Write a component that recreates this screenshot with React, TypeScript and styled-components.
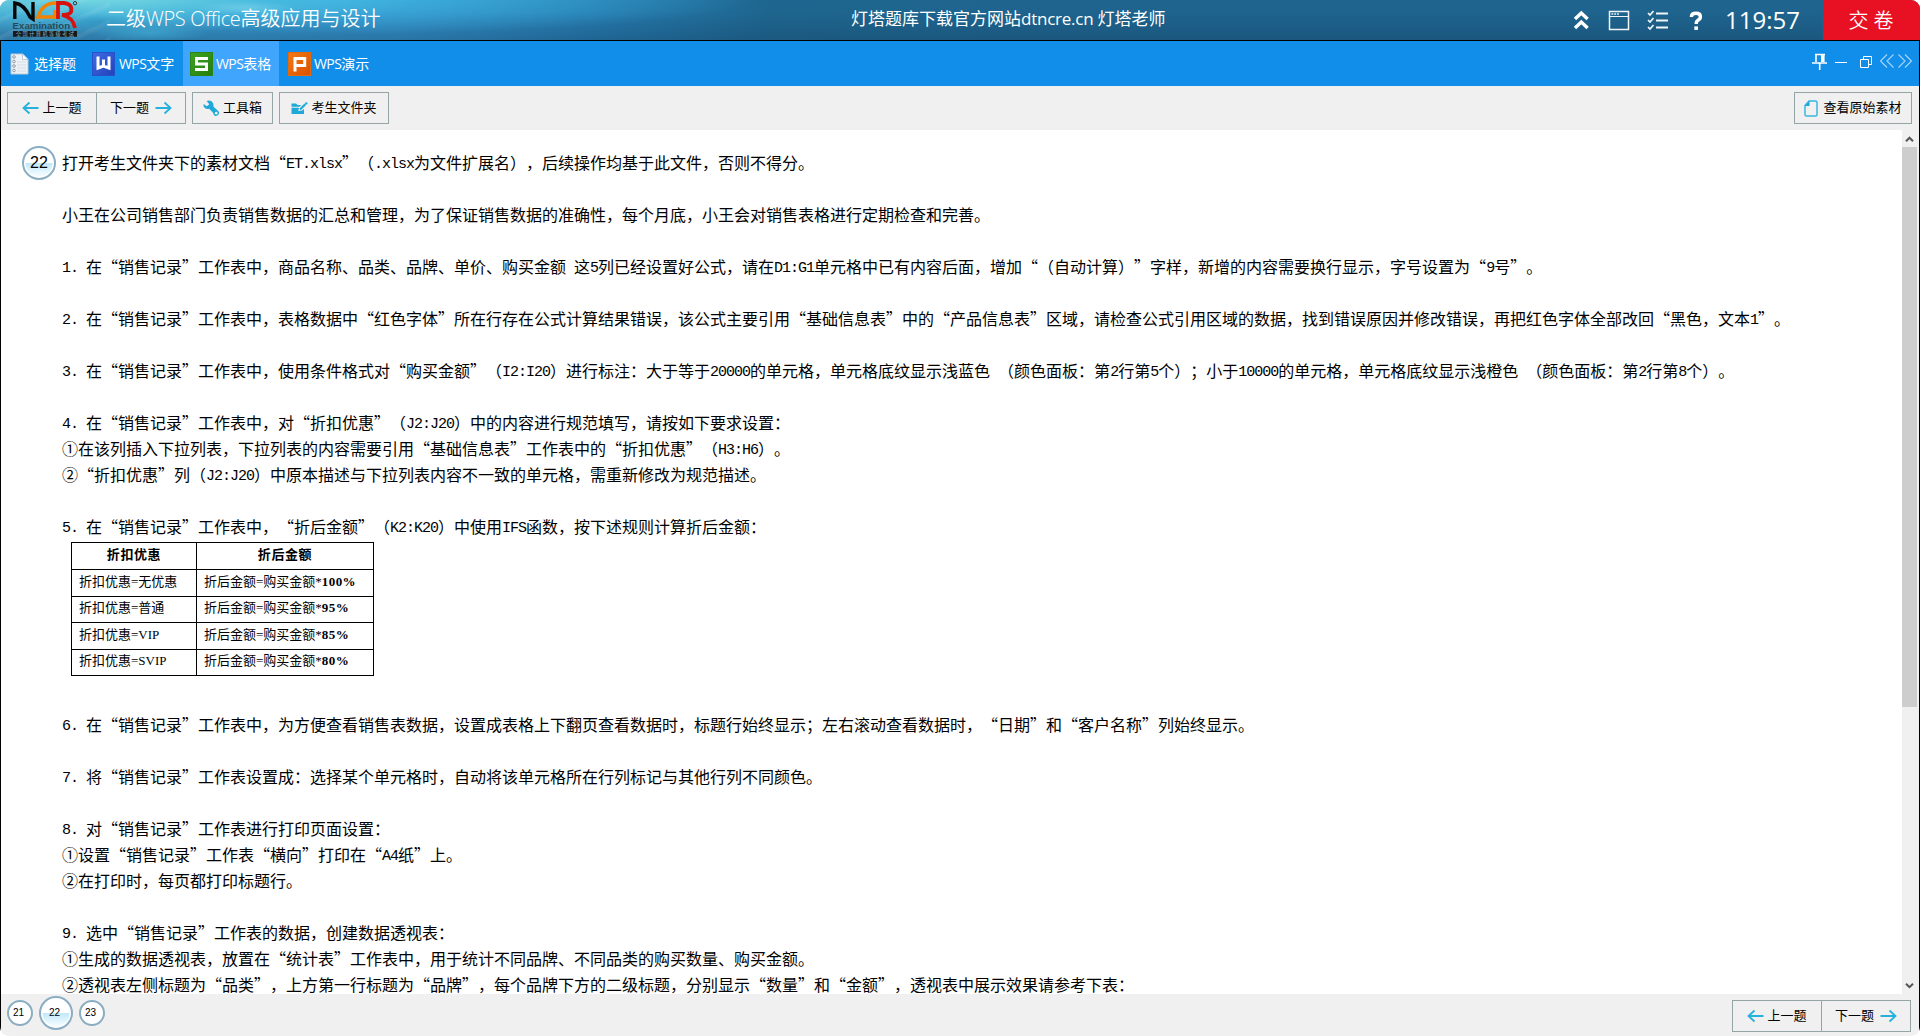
import React from "react";
import styled, { createGlobalStyle } from "styled-components";

const ui = `"Open Sans", "Noto Sans CJK SC", sans-serif`;
const cjk = `"Noto Sans CJK SC", sans-serif`;

const Global = createGlobalStyle`
  html, body { margin: 0; padding: 0; background: #fff; overflow: hidden; }
  * { box-sizing: border-box; }
  svg { display: block; flex: none; }
`;

const Window = styled.div`
  width: 1920px;
  height: 1036px;
  display: flex;
  flex-direction: column;
  overflow: hidden;
  border-radius: 9px;
  font-family: ${ui};
  text-spacing-trim: space-all;
  font-kerning: none;
`;

const Header = styled.header`
  height: 41px;
  flex: none;
  display: grid;
  grid-template-columns: 106px 745px 1fr auto 97px;
  border-bottom: 1px solid #000;
  color: #fff;
  background:
    radial-gradient(ellipse 60px 9px at 150px 33px, rgba(70, 190, 225, 0.5), transparent),
    radial-gradient(ellipse 50px 7px at 245px 8px, rgba(170, 235, 245, 0.35), transparent),
    radial-gradient(ellipse 36px 8px at 96px 22px, rgba(30, 130, 180, 0.35), transparent),
    repeating-linear-gradient(155deg, rgba(255, 255, 255, 0.07) 0 3px, transparent 6px 16px) 0 0 / 110px 40px no-repeat,
    radial-gradient(ellipse 330px 36px at 90px -2px, rgba(122, 220, 226, 0.95), rgba(80, 195, 225, 0.55) 55%, transparent),
    radial-gradient(ellipse 420px 38px at 340px -4px, rgba(64, 190, 232, 0.75), transparent),
    linear-gradient(to bottom, transparent 30%, rgba(20, 60, 95, 0.32)),
    linear-gradient(100deg, #3b97c6 0, #3696cd 250px, #338fc8 400px, #2579ad 590px, #1e668f 760px, #1e648e 1000px, #1e648e 100%);
`;

const LogoBox = styled.div`
  padding-left: 12px;
`;

const Title = styled.div`
  font-size: 20px;
  font-weight: 350;
  line-height: 37px;
  white-space: pre;
`;

const Tight = styled.span<{ $gap: number }>`
  letter-spacing: ${(p) => p.$gap}px;
`;

const Site = styled.div`
  font-size: 17px;
  line-height: 38px;
  white-space: pre;
`;

const HeaderTools = styled.div`
  display: flex;
  align-items: center;
  height: 40px;
`;

const Timer = styled.div`
  width: 98px;
  font-size: 24px;
  line-height: 40px;
`;

const Submit = styled.button`
  height: 40px;
  border: 0;
  padding: 0 0 0 4px;
  background: #e81123;
  color: #fff;
  font: 20px/40px ${cjk};
  font-weight: 350;
  letter-spacing: 5px;
`;

const Body = styled.main`
  flex: 1;
  min-height: 0;
  display: flex;
  flex-direction: column;
  border-left: 1px solid #000;
  border-right: 1px solid #000;
  background: #f0f0f0;
`;

const Tabs = styled.nav`
  height: 45px;
  flex: none;
  display: flex;
  background: #108ee9;
`;

const Tab = styled.div<{ $width: number; $pad: number; $gap?: number; $active?: boolean }>`
  width: ${(p) => p.$width}px;
  padding: 0 0 0 ${(p) => p.$pad}px;
  display: flex;
  align-items: center;
  gap: ${(p) => p.$gap ?? 4}px;
  color: #fff;
  background: ${(p) => (p.$active ? "#40a5fc" : "transparent")};
  font-size: 14px;
  line-height: 20px;
  white-space: nowrap;
`;

const TabTools = styled.div`
  margin-left: auto;
  padding-top: 11px;
  height: 36px;
`;

const Toolbar = styled.div`
  height: 44px;
  flex: none;
  display: flex;
  align-items: flex-start;
  padding: 6px 7px 0 6px;
`;

const ToolButton = styled.button<{ $width: number; $joined?: boolean; $gap?: number; $push?: boolean; $inner?: number }>`
  width: ${(p) => p.$width}px;
  height: 32px;
  margin-left: ${(p) => (p.$push ? "auto" : p.$joined ? "-1px" : `${p.$gap ?? 0}px`)};
  padding: 0;
  display: flex;
  align-items: center;
  justify-content: center;
  gap: ${(p) => p.$inner ?? 3}px;
  border: 1px solid #95a5a6;
  background: #f0f0f0;
  color: #000;
  font: 13px/20px ${cjk};
  white-space: nowrap;
`;

const Caption = styled.span`
  padding-bottom: 3px;
`;

const Reading = styled.div`
  height: 864px;
  flex: none;
  display: flex;
  background: #fff;
`;

const Document = styled.article`
  flex: 1;
  min-width: 0;
  height: 864px;
  overflow: hidden;
  display: grid;
  grid-template-columns: 40px 1fr;
  padding: 16px 0 0 21px;
`;

const Lines = styled.div`
  padding-top: 3px;
  font-family: ${cjk};
  font-size: 16px;
  font-weight: 400;
  color: #000;
`;

const Line = styled.p`
  margin: 0;
  height: 26px;
  line-height: 26px;
  white-space: pre;
`;

const Latin = styled.span`
  font-family: "Liberation Mono", monospace;
  font-size: 15px;
  line-height: 18px;
  vertical-align: 1px;
  letter-spacing: -1px;
`;

const Ball = styled.span<{ $size: number; $font: number; $filled?: boolean; $shift?: number }>`
  width: ${(p) => p.$size}px;
  height: ${(p) => p.$size}px;
  flex: none;
  display: flex;
  align-items: center;
  justify-content: center;
  padding-right: ${(p) => p.$shift ?? 0}px;
  border: 2px solid #8badc2;
  border-radius: 50%;
  color: #000;
  font-family: "Liberation Sans", sans-serif;
  font-size: ${(p) => p.$font}px;
  line-height: 1;
  background: ${(p) =>
    p.$filled
      ? "radial-gradient(circle, transparent 13px, #fff 14px), linear-gradient(to bottom, #fff 50%, #bfe8fa 50%, #f2fbff 90%)"
      : "#fff"};
`;

const Rules = styled.table`
  border-collapse: collapse;
  table-layout: fixed;
  width: 302px;
  margin: 3px 0 35px 9px;
  font: 13px/20px "Liberation Serif", "Noto Sans CJK SC", serif;
  color: #000;
`;

const RuleHead = styled.th<{ $width: number }>`
  width: ${(p) => p.$width}px;
  height: 27px;
  padding: 0 0 2px;
  border: 1px solid #000;
  font-weight: 700;
  letter-spacing: 0.6px;
`;

const RuleCell = styled.td`
  height: 26.5px;
  padding: 0 0 2px 7px;
  border: 1px solid #000;
  white-space: nowrap;

  b {
    letter-spacing: 0.4px;
  }
`;

const ScrollTrack = styled.div`
  width: 17px;
  margin-left: auto;
  background: #f0f0f0;
  display: grid;
  grid-template-rows: 17px 560px 1fr 17px;
  justify-items: start;
`;

const Thumb = styled.div`
  width: 15px;
  background: #cdcdcd;
`;

const Footer = styled.footer`
  flex: 1;
  display: flex;
  align-items: flex-start;
  padding: 2px 8px 0 6px;
`;

const Balls = styled.div`
  display: flex;
  align-items: center;
  gap: 6px;
`;

const FooterButtons = styled.div`
  display: flex;
  margin: 4px 0 0 auto;
`;

const Logo = () => (
  <svg width="68" height="38" viewBox="12 0 68 38">
    <path d="M14.8 19V3Q24 4 30 17L33 19V2" fill="none" stroke="#080808" strokeWidth="3.4" />
    <path d="M56 3Q42 3 38 17H55V10" fill="none" stroke="#f08300" strokeWidth="3.4" />
    <path d="M58 19V3H64Q73 4 71 12Q69 15 62 15Q73 17 75 28" fill="none" stroke="#d7110d" strokeWidth="3.8" />
    <circle cx="75" cy="3.2" r="1.7" fill="none" stroke="#222" strokeWidth="0.9" />
    <text x="12.6" y="29" fontFamily="Liberation Sans" fontSize="8.6" fontWeight="700" fill="#254b57" textLength="57.5" lengthAdjust="spacingAndGlyphs">Examination</text>
    <rect x="13" y="31" width="64" height="5.8" fill="#181818" />
    <text x="16" y="36" fontFamily="Noto Sans CJK SC" fontSize="5.2" fill="#83b7c2" textLength="58">全国计算机等级考试</text>
  </svg>
);

const HeaderIcons = () => (
  <svg width="152" height="40" viewBox="1573 0 152 40" fill="none" stroke="#fff">
    <path d="M1575 19L1581.3 13L1587.6 19M1575 28L1581.3 22L1587.6 28" strokeWidth="3.4" />
    <g stroke="#f0f5f8">
      <rect x="1609.5" y="11.5" width="19" height="18" strokeWidth="1.5" />
      <path d="M1610 16.5H1628" />
      <path d="M1611.5 14H1619" strokeWidth="1.6" strokeDasharray="1.8 1" />
      <path d="M1656 13.5H1668M1656 20.5H1668M1656 27.5H1668" strokeWidth="1.8" />
      <path d="M1648 13L1650 15L1653.5 11M1648 20L1650 22L1653.5 18M1648 27L1650 29L1653.5 25" strokeWidth="1.7" />
    </g>
    <path d="M1691.4 17Q1691.4 13.3 1696 13.3Q1700.4 13.3 1700.4 16.7Q1700.4 19 1698 20.2Q1696.2 21.2 1696.2 24" strokeWidth="3.4" />
    <rect x="1694.3" y="26.4" width="3.7" height="3.5" fill="#fff" stroke="none" />
  </svg>
);

const WindowIcons = () => (
  <svg width="110" height="24" viewBox="1809 52 110 24" fill="none" stroke="#fff">
    <path d="M1815 54.5H1825M1816 54V62M1812 63H1827M1819.7 63V70" strokeWidth="1.6" />
    <path d="M1822.8 54V62" strokeWidth="3.6" />
    <path d="M1835 62.5H1847" />
    <path d="M1860.5 59.5H1868.5V67.5H1860.5ZM1863.5 59V56.5H1871.5V64.5H1869" />
    <path d="M1887 54.5L1880.5 61L1887 67.5M1893.5 54.5L1887 61L1893.5 67.5M1898.5 54.5L1905 61L1898.5 67.5M1905 54.5L1911.5 61L1905 67.5" stroke="#a8d6fa" strokeWidth="1.1" />
  </svg>
);

const SheetIcon = () => (
  <svg width="19" height="24" viewBox="0 0 19 24">
    <path d="M2 2H13L18 7V22H1V2Z" fill="#eef1f5" stroke="#bcc9d6" />
    <path d="M12.5 2V7.5H18Z" fill="#fff" stroke="#9eb5cc" strokeWidth="0.7" />
    <path d="M7 10H16M7 13H16M7 16H16M7 19H16" stroke="#d4dce5" />
    <g fill="#fff" stroke="#868d95" strokeWidth="0.9">
      <circle cx="4" cy="5" r="1.3" />
      <circle cx="4" cy="9.5" r="1.3" />
      <circle cx="4" cy="14" r="1.3" />
      <circle cx="4" cy="18.5" r="1.3" />
    </g>
  </svg>
);

const marks = {
  w: { from: "#416ce4", to: "#2141b8", edge: "#2850c8", d: "M6 4.5V16L11.5 14L17 16V4.5M11.5 7.5V15" },
  s: { from: "#3da321", to: "#237d0d", edge: "#2b8615", d: "M18 6.5H6.5V12H16.5V17.5H5" },
  p: { from: "#f27a12", to: "#dc5000", edge: "#e4680c", d: "M7 19.5V6.5H16.7V13.6H7" },
};

const AppIcon = ({ kind }: { kind: keyof typeof marks }) => {
  const m = marks[kind];
  return (
    <svg width="23" height="24" viewBox="0 0 23 24">
      <defs>
        <linearGradient id={`mark-${kind}`} x1="0" y1="0" x2="1" y2="1">
          <stop offset="0" stopColor={m.from} />
          <stop offset="1" stopColor={m.to} />
        </linearGradient>
      </defs>
      <rect x="0.5" y="0.5" width="22" height="23" fill={`url(#mark-${kind})`} stroke={m.edge} />
      <path d={m.d} fill="none" stroke="#fff" strokeWidth="3" />
    </svg>
  );
};

const Arrow = ({ right }: { right?: boolean }) => (
  <svg width="17" height="14" viewBox="0 0 17 14" fill="none" stroke="#26b0dc" strokeWidth="1.8">
    <path d={right ? "M0.5 7H15.5M9.5 1.5L15.5 7L9.5 12.5" : "M16.5 7H1.5M7.5 1.5L1.5 7L7.5 12.5"} />
  </svg>
);

const Wrench = () => (
  <svg width="17" height="17" viewBox="0 0 17 17">
    <path d="M3.6 0.9Q8 -0.3 10 3Q10.8 5 10.3 6.4L15.2 11Q16.8 13 15.4 14.8Q13.5 16.7 11.4 15.4Q10.5 14.8 10 12.8L6.2 8.8Q2.5 9.8 0.8 6.8Q0.2 5.5 0.7 4L3.8 6.3L6.3 4.2Z" fill="#1ea9d8" />
    <circle cx="13.2" cy="13.2" r="1.4" fill="#f0f0f0" />
  </svg>
);

const FolderEdit = () => (
  <svg width="17" height="13" viewBox="0 0 17 13">
    <path d="M0.5 1.5H5L6.5 3H10L8.5 4.7H0.5Z" fill="#1ea9d8" />
    <path d="M0.5 5.8H8L7.2 8.9L11 8.6L13 7V12H0.5Z" fill="#1ea9d8" />
    <path d="M9 7.5L14.3 2.2" stroke="#1ea9d8" strokeWidth="2.2" />
    <circle cx="15.3" cy="1.4" r="1.2" fill="#1ea9d8" />
  </svg>
);

const PageIcon = () => (
  <svg width="14" height="17" viewBox="0 0 14 17">
    <path d="M5 1H11.5Q13 1 13 2.5V14.5Q13 16 11.5 16H2.5Q1 16 1 14.5V5.5Z" fill="none" stroke="#3ab7df" strokeWidth="1.5" />
    <path d="M5.5 0.8V6H0.8Z" fill="#1ea9d8" />
  </svg>
);

const Chevron = ({ down }: { down?: boolean }) => (
  <svg width="15" height="17" viewBox="0 0 15 17" fill="none" stroke="#555" strokeWidth="2">
    <path d={down ? "M4 6.7L7.5 10.2L11 6.7" : "M4 11.2L7.5 7.7L11 11.2"} />
  </svg>
);

const Prose = ({ text }: { text: string }) => (
  <Line>
    {text.split(/([\x20-\x7e]+)/).map((part, i) => (i % 2 ? <Latin key={i}>{part}</Latin> : part))}
  </Line>
);

const PrevNext = () => (
  <>
    <ToolButton $width={90}><Arrow /><Caption>上一题</Caption></ToolButton>
    <ToolButton $width={90} $joined $inner={6}><Caption>下一题</Caption><Arrow right /></ToolButton>
  </>
);

const before = [
  "打开考生文件夹下的素材文档“ET.xlsx”（.xlsx为文件扩展名），后续操作均基于此文件，否则不得分。",
  "",
  "小王在公司销售部门负责销售数据的汇总和管理，为了保证销售数据的准确性，每个月底，小王会对销售表格进行定期检查和完善。",
  "",
  "1. 在“销售记录”工作表中，商品名称、品类、品牌、单价、购买金额 这5列已经设置好公式，请在D1:G1单元格中已有内容后面，增加“（自动计算）”字样，新增的内容需要换行显示，字号设置为“9号”。",
  "",
  "2. 在“销售记录”工作表中，表格数据中“红色字体”所在行存在公式计算结果错误，该公式主要引用“基础信息表”中的“产品信息表”区域，请检查公式引用区域的数据，找到错误原因并修改错误，再把红色字体全部改回“黑色，文本1”。",
  "",
  "3. 在“销售记录”工作表中，使用条件格式对“购买金额”（I2:I20）进行标注：大于等于20000的单元格，单元格底纹显示浅蓝色 （颜色面板：第2行第5个）；小于10000的单元格，单元格底纹显示浅橙色 （颜色面板：第2行第8个）。",
  "",
  "4. 在“销售记录”工作表中，对“折扣优惠”（J2:J20）中的内容进行规范填写，请按如下要求设置：",
  "①在该列插入下拉列表，下拉列表的内容需要引用“基础信息表”工作表中的“折扣优惠”（H3:H6）。",
  "②“折扣优惠”列（J2:J20）中原本描述与下拉列表内容不一致的单元格，需重新修改为规范描述。",
  "",
  "5. 在“销售记录”工作表中，“折后金额”（K2:K20）中使用IFS函数，按下述规则计算折后金额：",
];

const after = [
  "6. 在“销售记录”工作表中，为方便查看销售表数据，设置成表格上下翻页查看数据时，标题行始终显示；左右滚动查看数据时，“日期”和“客户名称”列始终显示。",
  "",
  "7. 将“销售记录”工作表设置成：选择某个单元格时，自动将该单元格所在行列标记与其他行列不同颜色。",
  "",
  "8. 对“销售记录”工作表进行打印页面设置：",
  "①设置“销售记录”工作表“横向”打印在“A4纸”上。",
  "②在打印时，每页都打印标题行。",
  "",
  "9. 选中“销售记录”工作表的数据，创建数据透视表：",
  "①生成的数据透视表，放置在“统计表”工作表中，用于统计不同品牌、不同品类的购买数量、购买金额。",
  "②透视表左侧标题为“品类”，上方第一行标题为“品牌”，每个品牌下方的二级标题，分别显示“数量”和“金额”，透视表中展示效果请参考下表：",
];

const discounts = [
  ["无优惠", "100%"],
  ["普通", "95%"],
  ["VIP", "85%"],
  ["SVIP", "80%"],
];

export default function App() {
  return (
    <Window>
      <Global />
      <Header>
        <LogoBox><Logo /></LogoBox>
        <Title>二级<Tight $gap={-0.35}>WPS Office</Tight>高级应用与设计</Title>
        <Site>灯塔题库下载官方网站<Tight $gap={-0.25}>dtncre.cn </Tight>灯塔老师</Site>
        <HeaderTools>
          <HeaderIcons />
          <Timer>119:57</Timer>
        </HeaderTools>
        <Submit>交卷</Submit>
      </Header>
      <Body>
        <Tabs>
          <Tab $width={84} $pad={9} $gap={5}><SheetIcon />选择题</Tab>
          <Tab $width={98} $pad={7}><AppIcon kind="w" /><span><Tight $gap={-0.6}>WPS</Tight>文字</span></Tab>
          <Tab $width={96} $pad={7} $gap={3} $active><AppIcon kind="s" /><span><Tight $gap={-0.6}>WPS</Tight>表格</span></Tab>
          <Tab $width={98} $pad={9} $gap={3}><AppIcon kind="p" /><span><Tight $gap={-0.6}>WPS</Tight>演示</span></Tab>
          <TabTools><WindowIcons /></TabTools>
        </Tabs>
        <Toolbar>
          <PrevNext />
          <ToolButton $width={81} $gap={6}><Wrench /><Caption>工具箱</Caption></ToolButton>
          <ToolButton $width={110} $gap={6}><FolderEdit /><Caption>考生文件夹</Caption></ToolButton>
          <ToolButton $width={118} $push $inner={5}><PageIcon /><Caption>查看原始素材</Caption></ToolButton>
        </Toolbar>
        <Reading>
          <Document>
            <Ball $size={34} $font={16} $filled>22</Ball>
            <Lines>
              {before.map((t, i) => <Prose key={i} text={t} />)}
              <Rules>
                <tbody>
                  <tr>
                    <RuleHead $width={125}>折扣优惠</RuleHead>
                    <RuleHead $width={177}>折后金额</RuleHead>
                  </tr>
                  {discounts.map(([kind, rate]) => (
                    <tr key={kind}>
                      <RuleCell>折扣优惠={kind}</RuleCell>
                      <RuleCell>折后金额=购买金额*<b>{rate}</b></RuleCell>
                    </tr>
                  ))}
                </tbody>
              </Rules>
              {after.map((t, i) => <Prose key={i} text={t} />)}
            </Lines>
          </Document>
          <ScrollTrack>
            <Chevron />
            <Thumb />
            <span />
            <Chevron down />
          </ScrollTrack>
        </Reading>
        <Footer>
          <Balls>
            <Ball $size={26} $font={10} $shift={3}>21</Ball>
            <Ball $size={34} $font={10} $shift={3} $filled>22</Ball>
            <Ball $size={26} $font={10} $shift={3}>23</Ball>
          </Balls>
          <FooterButtons><PrevNext /></FooterButtons>
        </Footer>
      </Body>
    </Window>
  );
}
